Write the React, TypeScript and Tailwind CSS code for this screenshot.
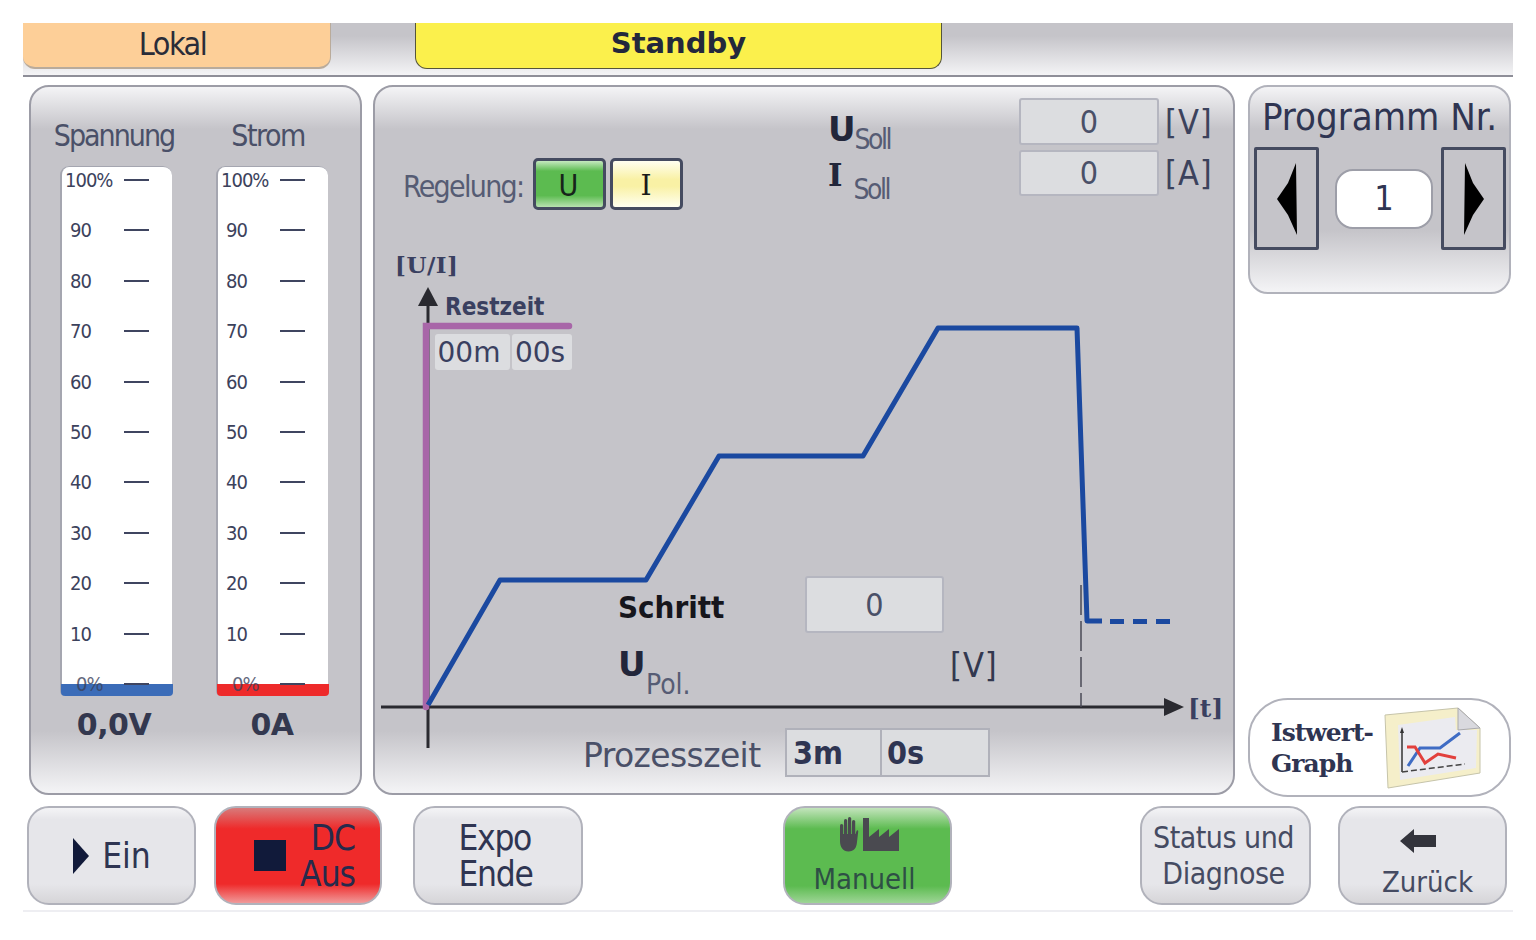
const sans = "font-['DejaVu_Sans_Condensed','DejaVu_Sans',sans-serif]"
const panelBg = 'bg-[linear-gradient(180deg,#f4f4f6_0px,#c5c4c9_42px,#c5c4c9_calc(100%-62px),#f4f4f6_100%)]'
const greyBtn = 'bg-[linear-gradient(180deg,#f4f4f6_0%,#e6e6ea_12%,#e6e6ea_80%,#d6d5d8_100%)]'

const ticks = ['100%', '90', '80', '70', '60', '50', '40', '30', '20', '10', '0%']

function Gauge({ label, value, barClass, labelClass, valueClass }: { label: string; value: string; barClass: string; labelClass: string; valueClass: string }) {
  return (
    <div className="flex flex-col items-center w-[112px]">
      <div className={`h-[36px] flex items-center text-[30px] text-[#4a5068] whitespace-nowrap ${labelClass}`}>{label}</div>
      <div className="relative mt-[13px] w-[112px] h-[530px] bg-white rounded-t-[9px] rounded-b-[5px] border-l-2 border-t border-[#a5a6b0] pt-[1px] flex flex-col justify-between">
        {ticks.map(t => (
          <div key={t} className={`relative z-10 flex items-center h-[24px] ${t === '100%' ? 'pl-[3px]' : t === '0%' ? 'pl-[14px]' : 'pl-[8px]'}`}>
            <span className={`text-[20px] tracking-[-1px] text-[#3c425c] ${t === '0%' ? 'opacity-80' : ''}`}>{t}</span>
            <span className="absolute left-[62px] w-[25px] h-[2px] bg-[#3f4560]" />
          </div>
        ))}
        <div className={`absolute left-[-1px] right-[-1px] bottom-0 h-[12px] rounded-b-[4px] ${barClass}`} />
      </div>
      <div className={`mt-[6px] text-[30px] font-bold text-[#33384f] tracking-[-0.5px] font-['DejaVu_Sans',sans-serif] ${valueClass}`}>{value}</div>
    </div>
  )
}

function BigBtn({ className, children }: { className: string; children: React.ReactNode }) {
  return (
    <button className={`h-[99px] rounded-[22px] border-2 border-[#b1b2bb] flex items-center text-[#2f3552] text-[35px] leading-[36px] ${className}`}>
      {children}
    </button>
  )
}

function HandFactory() {
  return (
    <svg width="62" height="36" viewBox="0 0 62 36" fill="#4a4a50">
      <rect x="1" y="8" width="3.200" height="16" rx="1.600" />
      <rect x="5" y="3" width="3.200" height="18" rx="1.600" />
      <rect x="9" y="1" width="3.200" height="20" rx="1.600" />
      <rect x="13" y="4" width="3.200" height="18" rx="1.600" />
      <path d="M1 18H16.500L17.500 15c.5-1.200 2-.6 1.700.8L18 26c-.5 6-3 9.500-8.500 9.500S1 31 1 25z" />
      <path d="M24 35V2H30V21L40 13V21L50 13V21L60 13V35Z" />
    </svg>
  )
}

function GraphIcon() {
  return (
    <svg width="110" height="95" viewBox="0 0 110 95" fill="none">
      <polygon points="5,15 78,8 100,28 100,73 8,88" fill="#f5efca" stroke="#c6c4aa" strokeWidth="1" />
      <polygon points="18,25 75,17 76,30 97,30 96,68 20,80" fill="#ebebf0" />
      <polygon points="78,8 100,28 78,30" fill="#d9d9de" stroke="#a9a9ae" strokeWidth="1" />
      <path d="M22 30V72" stroke="#333" strokeWidth="1.500" />
      <path d="M22 72L85 64" stroke="#444" strokeWidth="1.500" strokeDasharray="6 3" />
      <path d="M20 33L22 27L24 33Z" fill="#333" />
      <path d="M28 66L40 48H60L80 33" stroke="#3f6cc4" strokeWidth="3" />
      <path d="M27 47H35L45 63L58 54L76 58" stroke="#e2403c" strokeWidth="3" />
    </svg>
  )
}

function ArrowBtn({ dir }: { dir: 'left' | 'right' }) {
  return (
    <button className="w-[65px] h-[103px] border-[3px] border-[#454b60] bg-[#c5c4c9] rounded-[2px] flex items-center justify-center shrink-0">
      <svg width="24" height="72" viewBox="0 0 24 72" fill="#000">
        {dir === 'left' ? <path d="M21 0L22 72L13 52L2 36L13 20Z" /> : <path d="M3 0L2 72L11 52L22 36L11 20Z" />}
      </svg>
    </button>
  )
}

const field = 'bg-[#dcdde0] border-2 border-[#b5b6c0] rounded-[3px] flex items-center justify-center text-[32px] text-[#4a5068]'

export default function App() {
  return (
    <div className={`w-[1536px] h-[940px] bg-white overflow-hidden pt-[23px] pl-[23px] ${sans}`}>
      {/* status bar */}
      <div className="w-[1490px] h-[54px] border-b-2 border-[#8e8e98] bg-[linear-gradient(180deg,#c5c4c9_0%,#c5c4c9_25%,#f4f4f6_100%)] flex items-start">
        <div className="w-[308px] h-[46px] bg-[#fdcf98] rounded-b-[12px] border-b-2 border-r border-[#b9ab9b] flex items-center justify-center pr-[8px] pb-[2px] text-[32px] tracking-[-1.500px] text-[#2a2c38]">Lokal</div>
        <div className="ml-[84px] w-[527px] h-[46px] bg-[#fbf04c] rounded-b-[12px] border border-t-0 border-[#55553a] flex items-center justify-center pb-[4px] text-[29px] font-bold text-[#23283c] font-['DejaVu_Sans',sans-serif]">Standby</div>
      </div>

      <div className="flex mt-[8px] ml-[6px]">
        {/* gauges */}
        <div className={`w-[333px] h-[710px] rounded-[20px] border-2 border-[#9c9ca6] pt-[30px] pl-[29px] flex gap-[44px] ${panelBg}`}>
          <Gauge label="Spannung" value="0,0V" barClass="bg-[#3b6cb8]" labelClass="tracking-[-2px] pr-[4px]" valueClass="pr-[4px]" />
          <Gauge label="Strom" value="0A" barClass="bg-[#ee2a2a]" labelClass="tracking-[-1.500px] pr-[8px]" valueClass="" />
        </div>

        {/* process diagram */}
        <div className={`ml-[11px] w-[862px] h-[710px] rounded-[20px] border-2 border-[#9c9ca6] flex flex-col ${panelBg}`}>
          <div className="h-[139px] flex shrink-0">
            <div className="flex items-start pt-[71px] pl-[28px] w-[453px]">
              <span className="h-[56px] flex items-center text-[30px] tracking-[-1.700px] text-[#565c74]">Regelung:</span>
              <button className="ml-[10px] w-[73px] h-[52px] pt-[3px] pr-[3px] rounded-[5px] border-[3px] border-[#454b60] bg-[linear-gradient(180deg,#c5e8bf_0%,#5cbb50_22%,#5cbb50_75%,#b8e2b0_100%)] text-[30px] text-[#16241a] flex items-center justify-center">U</button>
              <button className="ml-[4px] w-[73px] h-[52px] pt-[3px] pr-[2px] rounded-[5px] border-[3px] border-[#454b60] bg-[linear-gradient(180deg,#fffff0_0%,#f9f1a5_40%,#f9f1a5_55%,#fffff0_100%)] text-[28px] text-[#1a1a1a] flex items-center justify-center font-['DejaVu_Serif',serif]">I</button>
            </div>
            <div className="w-[191px] pt-[20px] text-[#22263a]">
              <div className="h-[50px] flex items-start">
                <span className="text-[34px] leading-[44px] font-bold font-['DejaVu_Sans',sans-serif]">U</span>
                <span className="text-[28px] tracking-[-2.500px] mt-[12px] ml-[-1px] text-[#565c74]">Soll</span>
              </div>
              <div className="h-[50px] flex items-start">
                <span className="text-[31px] leading-[36px] font-bold font-['DejaVu_Serif',serif]">I</span>
                <span className="text-[28px] tracking-[-2.500px] mt-[12px] ml-[11px] text-[#565c74]">Soll</span>
              </div>
            </div>
            <div className="pt-[11px] flex flex-col gap-[5px]">
              <div className="flex items-center">
                <div className={`w-[140px] h-[47px] ${field}`}>0</div>
                <span className="ml-[6px] text-[34px] leading-[40px] tracking-[1px] text-[#3c425c]">[V]</span>
              </div>
              <div className="flex items-center">
                <div className={`w-[140px] h-[46px] ${field}`}>0</div>
                <span className="ml-[6px] text-[34px] leading-[40px] tracking-[1px] text-[#3c425c]">[A]</span>
              </div>
            </div>
          </div>

          {/* chart: coordinates in the svg are the ones of the page */}
          <div className="relative flex-1 text-[#33384f]">
            <svg className="absolute inset-0" width="858" height="567" viewBox="375 226 858 567" fill="none">
              <path d="M381 707H1168" stroke="#2a2a30" strokeWidth="3" />
              <path d="M1164 698L1184 707L1164 716Z" fill="#2a2a30" />
              <path d="M428 300V748" stroke="#2a2a30" strokeWidth="3" />
              <path d="M418 306L428 287L438 306Z" fill="#2a2a30" />
              <path d="M1081 585V707" stroke="#4a4a55" strokeWidth="1.500" strokeDasharray="30 6" />
              <path d="M426 707V326H569" stroke="#a866a8" strokeWidth="6.500" strokeLinecap="round" />
              <path d="M428 705L500 580H646L719 456H863L938 328H1077L1087 621H1102" stroke="#1b49a0" strokeWidth="5" strokeLinejoin="round" />
              <path d="M1110 621.500H1172" stroke="#1b49a0" strokeWidth="5" strokeDasharray="14 9" />
            </svg>
            <span className="absolute left-[20px] top-[24px] text-[23px] leading-[30px] font-bold font-['DejaVu_Serif',serif] tracking-[0.5px] text-[#3a4060]">[U/I]</span>
            <span className="absolute left-[70px] top-[66px] text-[24px] leading-[30px] font-bold text-[#3a4060]">Restzeit</span>
            <div className="absolute left-[60px] top-[108px] flex gap-[2px] text-[28px] leading-[36px] text-[#3a4060] font-['DejaVu_Sans',sans-serif]">
              <span className="w-[75px] h-[36px] pr-[7px] pt-[2px] bg-[#dcdde0] rounded-[3px] flex items-center justify-center">00m</span>
              <span className="w-[60px] h-[36px] pr-[4px] pt-[2px] bg-[#dcdde0] rounded-[3px] flex items-center justify-center">00s</span>
            </div>
            <span className="absolute left-[243px] top-[362px] text-[31px] leading-[38px] font-bold text-[#16161c]">Schritt</span>
            <div className={`absolute left-[430px] top-[350px] w-[139px] h-[57px] ${field}`}>0</div>
            <span className="absolute left-[243px] top-[416px] text-[34px] leading-[44px] font-bold text-[#22263a] font-['DejaVu_Sans',sans-serif]">U</span>
            <span className="absolute left-[271px] top-[441px] text-[28px] leading-[36px] text-[#565c74]">Pol.</span>
            <span className="absolute left-[575px] top-[418px] text-[34px] leading-[42px] tracking-[1px]">[V]</span>
            <span className="absolute left-[813px] top-[468px] text-[25px] leading-[30px] font-bold font-['DejaVu_Serif',serif] text-[#3a4060]">[t]</span>
            <span className="absolute left-[208px] top-[510px] text-[33px] leading-[40px] tracking-[-0.6px] text-[#4a5068] font-['DejaVu_Sans',sans-serif]">Prozesszeit</span>
            <div className="absolute left-[410px] top-[502px] flex h-[49px] w-[205px] bg-[#dcdde0] border-2 border-[#b0b1ba] text-[32px] font-bold text-[#2f3552]">
              <span className="w-[95px] border-r-2 border-[#b0b1ba] pl-[6px] flex items-center">3m</span>
              <span className="pl-[5px] flex items-center">0s</span>
            </div>
          </div>
        </div>

        {/* right column */}
        <div className="ml-[13px] w-[263px] h-[712px] flex flex-col justify-between">
          <div className={`h-[209px] rounded-[20px] border-2 border-[#b1b2bb] flex flex-col ${panelBg}`}>
            <div className="h-[60px] flex items-center justify-center text-[38px] text-[#2f3552] whitespace-nowrap">Programm Nr.</div>
            <div className="flex items-center pl-[4px]">
              <ArrowBtn dir="left" />
              <div className="ml-[16px] w-[98px] h-[60px] bg-white rounded-[18px] border-2 border-[#9d9ea8] flex items-center justify-center text-[34px] text-[#2f3552]">1</div>
              <div className="ml-[8px]"><ArrowBtn dir="right" /></div>
            </div>
          </div>
          <button className="h-[99px] rounded-[40px] border-2 border-[#b1b2bb] bg-white flex items-center pl-[21px] text-left">
            <span className="w-[109px] text-[25px] leading-[31px] font-bold font-['DejaVu_Serif',serif] tracking-[-1px] text-[#2f3552]">Istwert-<br />Graph</span>
            <GraphIcon />
          </button>
        </div>
      </div>

      {/* bottom buttons */}
      <div className="flex mt-[9px] ml-[4px]">
        <BigBtn className={`w-[169px] justify-center gap-[12px] ${greyBtn}`}>
          <svg width="18" height="36" viewBox="0 0 18 36" fill="#111a3a"><path d="M1 0L17 18L1 36Z" /></svg>
          <span>Ein</span>
        </BigBtn>
        <BigBtn className="ml-[18px] w-[168px] justify-end pr-[25px] gap-[14px] tracking-[-1px] bg-[linear-gradient(180deg,#d87a7a_0%,#ef2a2a_22%,#ef2a2a_80%,#f09a9a_100%)] text-[#262a4c] border-[#9ea3b8]">
          <span className="w-[32px] h-[31px] bg-[#111a3a]" />
          <span className="text-right">DC<br />Aus</span>
        </BigBtn>
        <BigBtn className={`ml-[31px] w-[170px] justify-center pr-[5px] tracking-[-1.300px] ${greyBtn}`}>
          <span className="text-left">Expo<br />Ende</span>
        </BigBtn>
        <BigBtn className="ml-[200px] w-[169px] flex-col justify-start pt-[8px] bg-[linear-gradient(180deg,#c3e4bc_0%,#5cbb50_22%,#5cbb50_82%,#9ed596_100%)] border-[#9aa3a0] !text-[#2e4f45] !text-[29px]">
          <div className="pl-[4px]"><HandFactory /></div>
          <span className="mt-[9px] pr-[6px]">Manuell</span>
        </BigBtn>
        <BigBtn className={`ml-[188px] w-[171px] justify-center tracking-[-0.5px] ${greyBtn} !text-[30px] !text-[#454b62]`}>
          <span className="pr-[4px]">Status und<br />Diagnose</span>
        </BigBtn>
        <BigBtn className={`ml-[27px] w-[169px] flex-col justify-start pt-[21px] ${greyBtn} !text-[29px] !text-[#454b62]`}>
          <div className="pr-[10px]">
            <svg width="36" height="24" viewBox="0 0 36 24" fill="#33343c"><path d="M0 12L14 0V6H36V18H14V24Z" /></svg>
          </div>
          <span className="mt-[11px] pl-[10px]">Zurück</span>
        </BigBtn>
      </div>
      <div className="mt-[5px] w-[1490px] h-[2px] bg-[#eeeef2]" />
    </div>
  )
}
